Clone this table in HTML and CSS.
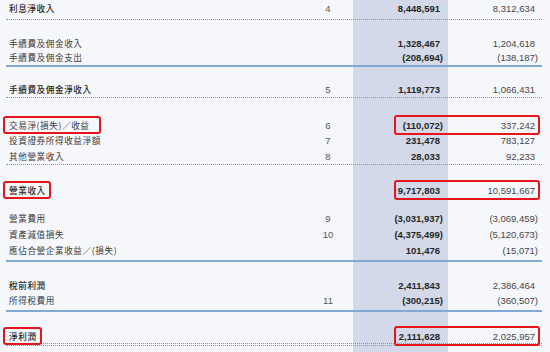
FILE: index.html
```html
<!DOCTYPE html>
<html lang="zh-Hant">
<head>
<meta charset="utf-8">
<link rel="stylesheet" href="styles.css">
</head>
<body>
<div class="stmt">
  <section class="sec s1 dotted">
    <div class="row bold"><div class="label">利息淨收入</div><div class="note">4</div><div class="vals"><span class="cur">8,448,591</span><span class="pri">8,312,634</span></div></div>
  </section>
  <section class="sec s2 solid">
    <div class="row"><div class="label">手續費及佣金收入</div><div class="note"></div><div class="vals"><span class="cur">1,328,467</span><span class="pri">1,204,618</span></div></div>
    <div class="row"><div class="label">手續費及佣金支出</div><div class="note"></div><div class="vals"><span class="cur"><span class="neg">(208,694)</span></span><span class="pri"><span class="neg">(138,187)</span></span></div></div>
  </section>
  <section class="sec s3 dotted">
    <div class="row bold"><div class="label">手續費及佣金淨收入</div><div class="note">5</div><div class="vals"><span class="cur">1,119,773</span><span class="pri">1,066,431</span></div></div>
  </section>
  <section class="sec s4 dotted">
    <div class="row boxed"><div class="label"><span class="mark mark-wide">交易淨(損失)／收益</span></div><div class="note">6</div><div class="vals"><span class="cur"><span class="neg">(110,072)</span></span><span class="pri">337,242</span></div></div>
    <div class="row"><div class="label">投資證券所得收益淨額</div><div class="note">7</div><div class="vals"><span class="cur">231,478</span><span class="pri">783,127</span></div></div>
    <div class="row"><div class="label">其他營業收入</div><div class="note">8</div><div class="vals"><span class="cur">28,033</span><span class="pri">92,233</span></div></div>
  </section>
  <section class="sec s5">
    <div class="row bold boxed"><div class="label"><span class="mark">營業收入</span></div><div class="note"></div><div class="vals"><span class="cur">9,717,803</span><span class="pri">10,591,667</span></div></div>
  </section>
  <section class="sec s6 solid">
    <div class="row"><div class="label">營業費用</div><div class="note">9</div><div class="vals"><span class="cur"><span class="neg">(3,031,937)</span></span><span class="pri"><span class="neg">(3,069,459)</span></span></div></div>
    <div class="row"><div class="label">資產減值損失</div><div class="note">10</div><div class="vals"><span class="cur"><span class="neg">(4,375,499)</span></span><span class="pri"><span class="neg">(5,120,673)</span></span></div></div>
    <div class="row"><div class="label">應佔合營企業收益／(損失)</div><div class="note"></div><div class="vals"><span class="cur">101,476</span><span class="pri"><span class="neg">(15,071)</span></span></div></div>
  </section>
  <section class="sec s7 solid">
    <div class="row bold"><div class="label">稅前利潤</div><div class="note"></div><div class="vals"><span class="cur">2,411,843</span><span class="pri">2,386,464</span></div></div>
    <div class="row"><div class="label">所得稅費用</div><div class="note">11</div><div class="vals"><span class="cur"><span class="neg">(300,215)</span></span><span class="pri"><span class="neg">(360,507)</span></span></div></div>
  </section>
  <section class="sec s8 dotted">
    <div class="row bold boxed"><div class="label"><span class="mark">淨利潤</span></div><div class="note"></div><div class="vals"><span class="cur">2,111,628</span><span class="pri">2,025,957</span></div></div>
  </section>
  <div class="double-rule"></div>
</div>
</body>
</html>
```

FILE: styles.css
```css
html, body {
  margin: 0;
  padding: 0;
  height: 100%;
}
body {
  background:
    linear-gradient(90deg, transparent 353px, #d3d9e8 353px, #d3d9e8 448px, transparent 448px),
    #f6f7fb;
  font-family: "Noto Sans CJK TC", "Liberation Sans", sans-serif;
  color: #3a3a3a;
  overflow: hidden;
}
.stmt {
  margin-left: 6px;
  width: 536px;
}
.sec.dotted { border-bottom: 1px dotted #6e9bd1; }
.sec.solid { border-bottom: 2px solid #82a8d4; }
.s1 { padding: 1px 0 3px; }
.s2 { padding: 16px 0 1px; }
.s2 .row { height: 14px; }
.s3 { padding: 15px 0 0; }
.s4 { padding: 18px 0 0; }
.s4 .row { height: 16px; }
.s5 { padding: 16px 0 4px; }
.s5 .row { height: 16px; }
.s6 { padding: 9px 0 2px; }
.s6 .row { height: 16px; }
.s7 { padding: 16px 0 2px; }
.s8 { padding: 15px 0 0; }
.s8 .row { height: 16px; }
.double-rule {
  margin-top: 1px;
  border-top: 1px dotted #6e9bd1;
}
.row {
  display: grid;
  grid-template-columns: 297px 50px 189px;
  height: 15px;
  align-items: center;
}
.label {
  padding-left: 3px;
  font-size: 8.6px;
  letter-spacing: 0.6px;
  line-height: 15px;
  white-space: nowrap;
  display: flex;
  align-items: center;
}
.bold .label { font-weight: 500; color: #262626; }
.note {
  text-align: center;
  font-family: "Liberation Sans", sans-serif;
  font-size: 9.5px;
  color: #555;
}
.vals {
  position: relative;
  display: grid;
  grid-template-columns: 95px 94px;
  align-items: center;
  height: 100%;
  font-family: "Liberation Sans", sans-serif;
  font-size: 9.5px;
}
.cur {
  text-align: right;
  padding-right: 8px;
  font-weight: 700;
  color: #262626;
}
.pri {
  text-align: right;
  padding-right: 7px;
  color: #474747;
}
.neg { margin-right: -3px; }
.mark {
  border: 2px solid #e8141c;
  border-radius: 3px;
  padding: 0 3px 0 4px;
  margin-left: -6px;
  line-height: 14px;
}
.mark-wide { padding-right: 9px; }
.boxed .vals::after {
  content: "";
  position: absolute;
  left: 41px;
  right: 2px;
  top: -1px;
  bottom: -1px;
  border: 2px solid #e8141c;
  border-radius: 3px;
}
```
